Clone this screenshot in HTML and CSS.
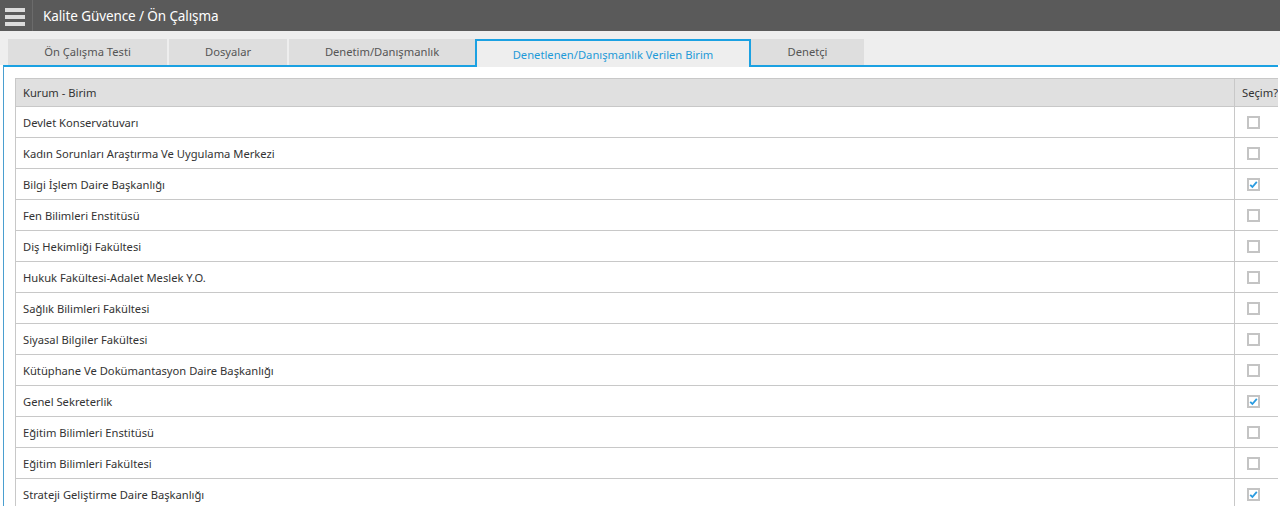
FILE: index.html
```html
<!DOCTYPE html>
<html lang="tr">
<head>
<meta charset="utf-8">
<title>Kalite Güvence / Ön Çalışma</title>
<link rel="stylesheet" href="styles.css">
</head>
<body>
<header class="topbar">
  <div class="menu" aria-label="Menü"><span></span><span></span><span></span></div>
  <h1 class="title">Kalite Güvence / Ön Çalışma</h1>
</header>
<nav class="tabs">
  <div class="tab t1">Ön Çalışma Testi</div>
  <div class="tab t2">Dosyalar</div>
  <div class="tab t3">Denetim/Danışmanlık</div>
  <div class="tab active t4">Denetlenen/Danışmanlık Verilen Birim</div>
  <div class="tab t5">Denetçi</div>
</nav>
<section class="panel">
  <table class="grid">
    <thead>
      <tr><th class="name">Kurum - Birim</th><th class="sel">Seçim?</th></tr>
    </thead>
    <tbody>
      <tr><td>Devlet Konservatuvarı</td><td class="sel"><span class="cb"></span></td></tr>
      <tr><td>Kadın Sorunları Araştırma Ve Uygulama Merkezi</td><td class="sel"><span class="cb"></span></td></tr>
      <tr><td>Bilgi İşlem Daire Başkanlığı</td><td class="sel"><span class="cb checked"><svg viewBox="0 0 9 9"><path d="M1.2 4.8 L3.4 7 L7.8 1.8" /></svg></span></td></tr>
      <tr><td>Fen Bilimleri Enstitüsü</td><td class="sel"><span class="cb"></span></td></tr>
      <tr><td>Diş Hekimliği Fakültesi</td><td class="sel"><span class="cb"></span></td></tr>
      <tr><td>Hukuk Fakültesi-Adalet Meslek Y.O.</td><td class="sel"><span class="cb"></span></td></tr>
      <tr><td>Sağlık Bilimleri Fakültesi</td><td class="sel"><span class="cb"></span></td></tr>
      <tr><td>Siyasal Bilgiler Fakültesi</td><td class="sel"><span class="cb"></span></td></tr>
      <tr><td>Kütüphane Ve Dokümantasyon Daire Başkanlığı</td><td class="sel"><span class="cb"></span></td></tr>
      <tr><td>Genel Sekreterlik</td><td class="sel"><span class="cb checked"><svg viewBox="0 0 9 9"><path d="M1.2 4.8 L3.4 7 L7.8 1.8" /></svg></span></td></tr>
      <tr><td>Eğitim Bilimleri Enstitüsü</td><td class="sel"><span class="cb"></span></td></tr>
      <tr><td>Eğitim Bilimleri Fakültesi</td><td class="sel"><span class="cb"></span></td></tr>
      <tr><td>Strateji Geliştirme Daire Başkanlığı</td><td class="sel"><span class="cb checked"><svg viewBox="0 0 9 9"><path d="M1.2 4.8 L3.4 7 L7.8 1.8" /></svg></span></td></tr>
    </tbody>
  </table>
</section>
</body>
</html>
```
FILE: styles.css
```css
* { box-sizing: border-box; }
html, body { margin: 0; padding: 0; }
body {
  width: 1280px;
  height: 506px;
  overflow: hidden;
  background: #fff;
  font-family: "Noto Sans", "Open Sans", sans-serif;
  color: #333;
}
.topbar {
  height: 31px;
  background: #5a5a5a;
  display: flex;
  align-items: center;
}
.menu {
  width: 33px;
  height: 31px;
  padding: 8px 0 0 5px;
  border-right: 1px solid #6b6b6b;
  display: flex;
  flex-direction: column;
  gap: 3px;
}
.menu span {
  display: block;
  width: 20px;
  height: 4px;
  background: #dcdcdc;
}
.title {
  margin: 0 0 0 10px;
  font-size: 13.5px;
  font-weight: normal;
  color: #fff;
  letter-spacing: -0.1px;
}
.tabs {
  display: flex;
  align-items: flex-end;
  padding: 8px 0 0 8px;
  height: 36px;
  margin-bottom: -2px;
  position: relative;
  z-index: 1;
  background: linear-gradient(#eeeeee, #eeeeee) top / 100% 34px no-repeat;
}
.tab {
  height: 26px;
  margin-bottom: 2px;
  background: #dedede;
  color: #555;
  font-size: 11.2px;
  display: flex;
  align-items: center;
  justify-content: center;
  padding-bottom: 2px;
  white-space: nowrap;
}
.t1 { width: 159px; margin-right: 2px; }
.t2 { width: 118px; margin-right: 2px; }
.t3 { width: 186px; }
.t4 { width: 276px; }
.t5 { width: 113px; }
.tab.active {
  height: 28px;
  margin-bottom: 0;
  background: #eeeeee;
  color: #1e9ad8;
  border: 2px solid #1ba1e2;
  border-bottom: none;
  padding-bottom: 0;
}
.panel {
  margin-left: 3px;
  width: 1275px;
  height: 450px;
  border-top: 2px solid #1ba1e2;
  border-left: 1px solid #4a9fd0;
  background: #fff;
  padding: 11px 0 0 11px;
  overflow: hidden;
}
.grid {
  border-collapse: collapse;
  table-layout: fixed;
  width: 1290px;
  font-size: 11.2px;
}
.grid th, .grid td {
  border: 1px solid #c8c8c8;
  text-align: left;
  font-weight: normal;
  padding: 0 0 0 7px;
  white-space: nowrap;
  color: #333;
}
.grid th {
  background: #e0e0e0;
  height: 28px;
}
.grid td { height: 31px; }
.grid .name { width: 1219px; }
.grid td.sel { padding-left: 12px; }
.cb {
  display: block;
  width: 13px;
  height: 13px;
  border: 2px solid #c4c4c4;
  background: #fff;
}
.cb svg {
  display: block;
  width: 9px;
  height: 9px;
}
.cb svg path {
  fill: none;
  stroke: #2a9be0;
  stroke-width: 1.8;
}
```
